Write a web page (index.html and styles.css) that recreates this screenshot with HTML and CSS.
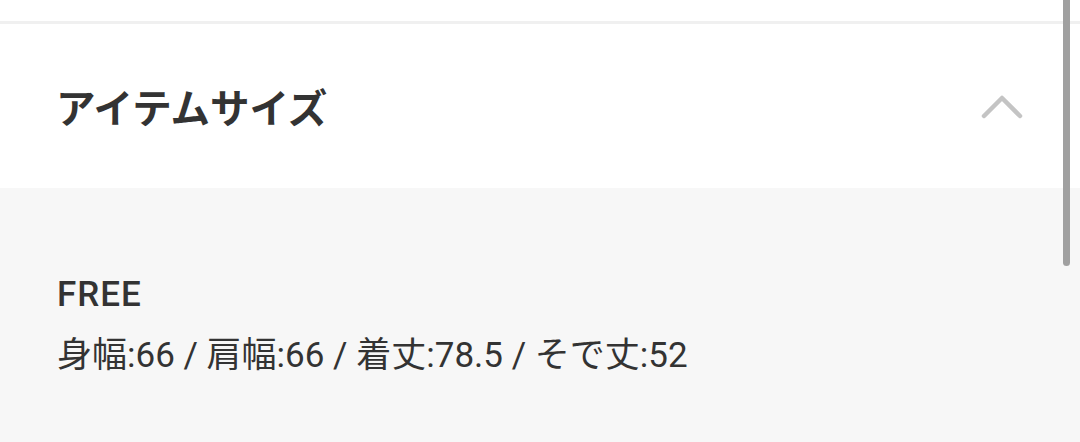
FILE: index.html
```html
<!DOCTYPE html>
<html lang="ja">
<head>
<meta charset="utf-8">
<link rel="stylesheet" href="styles.css">
</head>
<body>
<div class="page">
  <div class="top"></div>
  <div class="divider"></div>
  <div class="header">
    <h2 class="title">アイテムサイズ</h2>
    <svg class="chevron" width="44" height="28" viewBox="0 0 44 28">
      <polyline points="4,24 22,6 40,24" fill="none" stroke="#c4c4c4" stroke-width="4.5" stroke-linecap="round" stroke-linejoin="round"/>
    </svg>
  </div>
  <div class="content">
    <div class="size-name">FREE</div>
    <div class="size-detail">身幅:66 / 肩幅:66 / 着丈:78.5 / そで丈:52</div>
  </div>
  <div class="scrollbar"></div>
</div>
</body>
</html>
```
FILE: styles.css
```css
html, body {
  margin: 0;
  padding: 0;
  background: #f7f7f7;
}
.page {
  position: relative;
  width: 1080px;
  height: 442px;
  overflow: hidden;
  font-family: Roboto, "Noto Sans CJK JP", sans-serif;
  color: #333;
  background: #f7f7f7;
}
.top {
  height: 21px;
  background: #fff;
}
.divider {
  height: 3px;
  background: #f0f0f0;
}
.header {
  height: 164px;
  background: #fff;
  display: flex;
  align-items: center;
  justify-content: space-between;
  padding: 0 56px 0 56px;
}
.title {
  margin: 0 0 2px;
  font-family: "Noto Sans CJK JP", sans-serif;
  font-size: 39.5px;
  font-weight: 700;
  color: #333;
  letter-spacing: 0;
}
.chevron {
  display: block;
}
.content {
  padding: 87px 57px 0;
}
.size-name {
  font-size: 35px;
  font-weight: 500;
  letter-spacing: 1px;
  line-height: 40px;
  color: #333;
}
.size-detail {
  margin-top: 21px;
  font-size: 35px;
  line-height: 40px;
  color: #333;
}
.scrollbar {
  position: absolute;
  top: 0;
  left: 1063px;
  width: 7px;
  height: 266px;
  border-radius: 0 0 4px 4px;
  background: #a0a0a0;
}
```
